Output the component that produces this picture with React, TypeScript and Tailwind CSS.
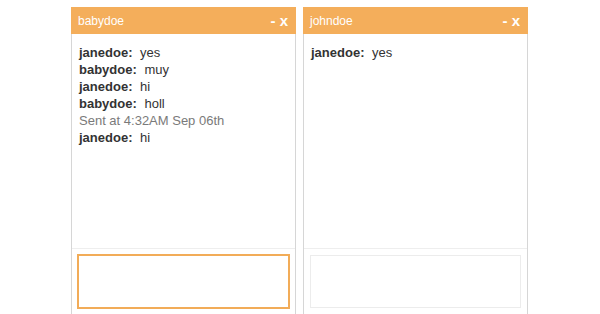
type Line = { from?: string; text: string };

const chats: { title: string; lines: Line[]; focused: boolean }[] = [
  {
    title: "babydoe",
    focused: true,
    lines: [
      { from: "janedoe", text: "yes" },
      { from: "babydoe", text: "muy" },
      { from: "janedoe", text: "hi" },
      { from: "babydoe", text: "holl" },
      { text: "Sent at 4:32AM Sep 06th" },
      { from: "janedoe", text: "hi" },
    ],
  },
  {
    title: "johndoe",
    focused: false,
    lines: [{ from: "janedoe", text: "yes" }],
  },
];

function ChatBox({ title, lines, focused }: { title: string; lines: Line[]; focused: boolean }) {
  return (
    <div className="w-[225px] flex flex-col shrink-0">
      <div className="h-[29px] bg-[#f4ae5b] flex items-center justify-between pl-[7px] pr-[8px] text-white">
        <span className="text-[12px]">{title}</span>
        <span className="text-[15px] font-bold leading-none">- x</span>
      </div>
      <div className="border-x border-[#d6d6d6] flex flex-col h-[300px]">
        <div className="h-[214px] px-[7px] pt-[10px] text-[13px] leading-[17px] text-[#333]">
          {lines.map((l, i) =>
            l.from ? (
              <div key={i}>
                <span className="font-bold pr-1">{l.from}:</span> {l.text}
              </div>
            ) : (
              <div key={i} className="text-[#7a7a7a]">
                {l.text}
              </div>
            )
          )}
        </div>
        <div className="border-t border-[#eeeeee] px-[5px] pt-[5px]">
          {focused ? (
            <div className="h-[55px] border-2 border-[#f2ac58] bg-white" />
          ) : (
            <div className="h-[53px] mx-[1px] mt-[1px] border border-[#ececec] bg-white" />
          )}
        </div>
      </div>
    </div>
  );
}

export default function App() {
  return (
    <div
      className="h-[314px] w-[600px] overflow-hidden bg-white pl-[71px] pt-[7px] flex gap-[7px]"
      style={{ fontFamily: '"Liberation Sans", Arial, sans-serif' }}
    >
      {chats.map((c) => (
        <ChatBox key={c.title} {...c} />
      ))}
    </div>
  );
}
